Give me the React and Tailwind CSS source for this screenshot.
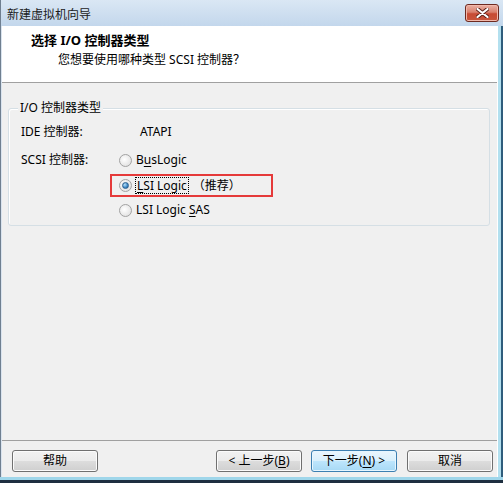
import React from "react";

const font = "font-['Noto_Sans','Noto_Sans_CJK_SC',sans-serif]";

function Radio({ checked }) {
  return (
    <span className="relative flex h-[13px] w-[13px] shrink-0 items-center justify-center rounded-full border border-[#a2a2a2] bg-[radial-gradient(circle_at_40%_40%,#ffffff,#dadada)]">
      {checked && (
        <span className="h-[7px] w-[7px] rounded-full border border-[#2a5f8e] bg-[radial-gradient(circle_at_35%_35%,#b8e1fa,#3b86c4_60%,#1f5c93)]" />
      )}
    </span>
  );
}

function Button({ children, primary, className = "" }) {
  const look = primary
    ? "border-[#3c7fb1] bg-[linear-gradient(#eaf6fd_0%,#d9f0fc_49%,#bee6fd_50%,#a7d9f5_100%)] shadow-[inset_0_0_0_1px_#e6f6ff]"
    : "border-[#707070] bg-[linear-gradient(#f2f2f2_0%,#ebebeb_49%,#dddddd_50%,#cfcfcf_100%)] shadow-[inset_0_0_0_1px_#fbfbfb]";
  return (
    <div
      className={`flex h-[22px] w-[86px] items-center justify-center rounded-[3px] border text-[12px] leading-none text-black ${look} ${className}`}
    >
      {children}
    </div>
  );
}

export default function App() {
  return (
    <div className={`flex h-[483px] w-[503px] flex-col overflow-hidden bg-[#f0f0f0] ${font} text-[12px] text-black`}>
      {/* title bar */}
      <div className="flex h-[26px] shrink-0 items-start border-l border-[#6f7f90] bg-[linear-gradient(#dae7f4,#c3d7ec)]">
        <div className="pl-[6px] pt-[7px] text-[12px] leading-[16px] text-[#1b1b1b]">新建虚拟机向导</div>
        <div className="ml-auto mr-[4px] mt-[4px] flex h-[18px] w-[34px] items-center justify-center rounded-[3px] border border-[#6e2a20] bg-[linear-gradient(#eab1a4_0%,#d9806d_45%,#c74a33_55%,#c9563c_100%)] shadow-[inset_0_0_0_1px_#f1b9ac]">
          <svg width="13" height="10" viewBox="0 0 13 10">
            <path
              d="M1.5 1 L11.5 9 M11.5 1 L1.5 9"
              stroke="#5a1f16"
              strokeWidth="4"
              strokeLinecap="round"
            />
            <path
              d="M1.5 1 L11.5 9 M11.5 1 L1.5 9"
              stroke="#ffffff"
              strokeWidth="2.2"
              strokeLinecap="round"
            />
          </svg>
        </div>
      </div>

      {/* window body between frame edges */}
      <div className="flex min-h-0 flex-1">
        <div className="w-[2px] shrink-0 border-l border-[#6f7f90] bg-[#d9e3ee]" />

        <div className="flex min-w-0 flex-1 flex-col">
          {/* header */}
          <div className="h-[57px] shrink-0 border-b border-[#a0a0a0] bg-white pl-[29px] pt-[6px]">
            <div className="text-[13px] font-bold leading-[16px]">选择 I/O 控制器类型</div>
            <div className="mt-[4px] pl-[27px] text-[12px] leading-[16px]">
              您想要使用哪种类型 SCSI 控制器？
            </div>
          </div>

          {/* content */}
          <div className="flex-1">
            <div className="relative ml-[6px] mr-[7px] mt-[25px] h-[118px] rounded-[3px] border border-[#d5dfe5] shadow-[inset_1px_1px_0_#ffffff]">
              <span className="absolute left-[9px] top-[-9px] bg-[#f0f0f0] px-[2px] leading-[16px]">
                I/O 控制器类型
              </span>

              <div className="pt-[13px]">
                <div className="flex h-[20px] items-center">
                  <div className="w-[101px] pl-[12px]">IDE 控制器:</div>
                  <div className="pl-[30px]">ATAPI</div>
                </div>

                <div className="mt-[8px] flex">
                  <div className="flex h-[20px] w-[101px] items-center pl-[12px]">SCSI 控制器:</div>
                  <div className="flex flex-col">
                    <div className="flex h-[20px] items-center gap-[4px] pl-[9px]">
                      <Radio />
                      <span>
                        B<span className="underline underline-offset-2">u</span>sLogic
                      </span>
                    </div>
                    <div className="mt-[4px] flex h-[23px] w-[163px] items-center border-2 border-[#e53a3a] pl-[7px]">
                      <Radio checked />
                      <span className="ml-[3px] border border-dotted border-black px-[1px] leading-[15px]">
                        <span className="underline underline-offset-2">L</span>SI Logic
                      </span>
                      <span className="ml-[4px]">（推荐）</span>
                    </div>
                    <div className="mt-[3px] flex h-[20px] items-center gap-[4px] pl-[9px]">
                      <Radio />
                      <span>
                        LSI Logic <span className="underline underline-offset-2">S</span>AS
                      </span>
                    </div>
                  </div>
                </div>
              </div>
            </div>
          </div>

          {/* button row */}
          <div className="flex h-[37px] shrink-0 items-start border-t border-[#a0a0a0] pt-[9px]">
            <Button className="ml-[10px] w-[85px]">帮助</Button>
            <div className="ml-auto mr-[4px] flex gap-[9px]">
              <Button>
                &lt; 上一步(<span className="underline underline-offset-2">B</span>)
              </Button>
              <Button primary>
                下一步(<span className="underline underline-offset-2">N</span>) &gt;
              </Button>
              <Button className="ml-[1px]">取消</Button>
            </div>
          </div>
        </div>

        <div className="flex w-[6px] shrink-0">
          <div className="w-[1px] bg-white" />
          <div className="w-[3px] bg-[#b3e0ef]" />
          <div className="w-[2px] bg-[#2f5d7c]" />
        </div>
      </div>

      {/* bottom frame */}
      <div className="flex h-[6px] shrink-0 flex-col">
        <div className="h-[3px] bg-[#9fd6ea]" />
        <div className="h-[3px] bg-[#1e2f40]" />
      </div>
    </div>
  );
}
